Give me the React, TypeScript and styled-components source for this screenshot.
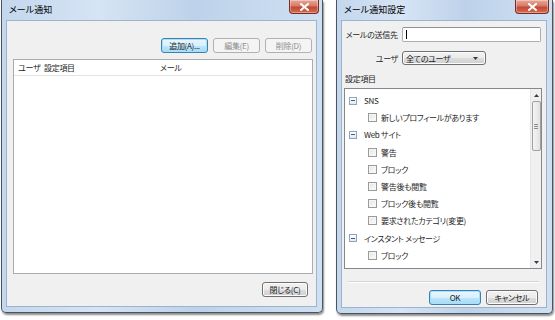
import React from "react";
import styled, { createGlobalStyle, css } from "styled-components";

const Global = createGlobalStyle`
  html, body { margin: 0; padding: 0; background: #ffffff; }
  body {
    font-family: "Noto Sans CJK JP", "Noto Sans", sans-serif;
    font-size: 8px;
    letter-spacing: -0.3px;
    font-feature-settings: "palt";
    color: #1e1e1e;
  }
  * { box-sizing: border-box; }
`;

const Page = styled.div`
  width: 555px;
  height: 320px;
  display: flex;
  align-items: flex-start;
  padding-left: 1px;
  gap: 13px;
`;

const Window = styled.div<{ $w: number; $h: number }>`
  width: ${(p) => p.$w}px;
  height: ${(p) => p.$h}px;
  display: flex;
  flex-direction: column;
  background: linear-gradient(90deg, #c3d7ee 0%, #d6e4f4 30%, #bdd2ea 60%, #cfe0f2 100%);
  border: 1px solid #4a5360;
  border-top: none;
  border-radius: 0 0 5px 5px;
  box-shadow: 1px 2px 2px rgba(0, 0, 0, 0.45);
  padding: 0 5px 5px 4px;
`;

const TitleBar = styled.div`
  height: 20px;
  flex: none;
  display: flex;
  justify-content: space-between;
  align-items: flex-start;
  margin-right: -2px;
`;

const Title = styled.span`
  font-size: 9px;
  letter-spacing: 0;
  line-height: 20px;
  padding-left: 3px;
  color: #000;
`;

const CloseBtn = styled.div<{ $w: number }>`
  width: ${(p) => p.$w}px;
  height: 14px;
  border: 1px solid #7a2a20;
  border-top: none;
  border-radius: 0 0 4px 4px;
  background: linear-gradient(180deg, #e9a99a 0%, #d77a66 45%, #c24a35 55%, #d46b52 100%);
  display: flex;
  align-items: center;
  justify-content: center;
  box-shadow: inset 0 0 0 1px rgba(255, 255, 255, 0.35);
`;

const Client = styled.div`
  flex: 1;
  background: #f0f0f0;
  border: 1px solid #9db3cc;
  display: flex;
  flex-direction: column;
  min-height: 0;
`;

const btnBase = css`
  height: 15px;
  border-radius: 3px;
  font-family: inherit;
  padding: 0;
  display: flex;
  align-items: center;
  justify-content: center;
`;

const Button = styled.div<{ $w: number; $variant?: "default" | "disabled" | "normal" }>`
  ${btnBase};
  width: ${(p) => p.$w}px;
  ${(p) =>
    p.$variant === "default"
      ? css`
          border: 1px solid #3c7fb1;
          background: linear-gradient(180deg, #eaf6fd 0%, #d9f0fc 50%, #bee6fd 52%, #a7d9f5 100%);
          color: #1a1a1a;
          box-shadow: inset 0 0 0 1px #a8e0f8;
        `
      : p.$variant === "disabled"
      ? css`
          border: 1px solid #adb2b5;
          background: #f4f4f4;
          color: #8d8d8d;
        `
      : css`
          border: 1px solid #707070;
          background: linear-gradient(180deg, #f2f2f2 0%, #ebebeb 50%, #dddddd 52%, #cfcfcf 100%);
          color: #1a1a1a;
          box-shadow: inset 0 0 0 1px #fcfcfc;
        `}
`;

/* ---------- Window 1 ---------- */

const Body1 = styled.div`
  flex: 1;
  display: flex;
  flex-direction: column;
  padding: 17px 4px 9px 6px;
`;

const ButtonRow = styled.div`
  display: flex;
  justify-content: flex-end;
  gap: 5px;
`;

const ListBox = styled.div`
  margin-top: 6px;
  height: 215px;
  background: #ffffff;
  border: 1px solid #a9acb1;
  margin-right: -1px;
`;

const ListHeader = styled.div`
  display: grid;
  grid-template-columns: 29px 114px 1fr;
  height: 16px;
  border-bottom: 1px solid #e3e3e3;
  align-items: center;
`;

const HeaderCell = styled.div<{ $pl: number }>`
  padding-left: ${(p) => p.$pl}px;
  line-height: 15px;
  white-space: nowrap;
  color: #1e1e1e;
`;

const Footer1 = styled.div`
  margin-top: auto;
  display: flex;
  justify-content: flex-end;
  padding-right: 4px;
`;

/* ---------- Window 2 ---------- */

const Body2 = styled.div`
  flex: 1;
  display: flex;
  flex-direction: column;
  padding: 5px 5px 5px 2px;
`;

const FieldRow = styled.div<{ $mt?: number }>`
  display: flex;
  align-items: center;
  height: 16px;
  margin-top: ${(p) => p.$mt ?? 0}px;
`;

const FieldLabel = styled.span`
  width: 58px;
  text-align: right;
  padding-right: 4px;
  white-space: nowrap;
`;

const TextInput = styled.div`
  width: 140px;
  height: 15px;
  background: #ffffff;
  border: 1px solid #abadb3;
  border-top-color: #8e9196;
  border-radius: 2px;
  display: flex;
  align-items: center;
  padding-left: 3px;
`;

const Caret = styled.span`
  width: 1px;
  height: 9px;
  background: #000;
`;

const Select = styled.div`
  width: 84px;
  height: 14px;
  border: 1px solid #707070;
  border-radius: 3px;
  background: linear-gradient(180deg, #f2f2f2 0%, #ebebeb 50%, #dddddd 52%, #cfcfcf 100%);
  box-shadow: inset 0 0 0 1px #fcfcfc;
  display: flex;
  align-items: center;
  justify-content: space-between;
  padding: 0 7px 0 3px;
`;

const SectionLabel = styled.div`
  margin-top: 6px;
  padding-left: 1px;
  line-height: 14px;
`;

const TreeBox = styled.div`
  margin-top: 2px;
  height: 181px;
  width: 198px;
  background: #ffffff;
  border: 1px solid #828790;
  display: flex;
`;

const TreeList = styled.div`
  flex: 1;
  padding-top: 3px;
`;

const TreeRow = styled.div<{ $level: number }>`
  height: 17.2px;
  display: flex;
  align-items: center;
  padding-left: ${(p) => (p.$level === 0 ? 4 : 23)}px;
  gap: 4px;
  white-space: nowrap;
`;

const Expander = styled.span`
  width: 8px;
  height: 8px;
  border: 1px solid #8ea4bf;
  background: linear-gradient(180deg, #ffffff, #e4e9ef);
  display: flex;
  align-items: center;
  justify-content: center;
  margin-right: 3px;
  &::after {
    content: "";
    width: 4px;
    height: 1px;
    background: #3d5a80;
  }
`;

const Check = styled.span`
  width: 9px;
  height: 9px;
  border: 1px solid #999a9a;
  background: linear-gradient(135deg, #e2e2e2 0%, #f6f6f6 70%, #ffffff 100%);
  box-shadow: inset 0 0 0 1px #f6f6f6;
`;

const ScrollBar = styled.div`
  width: 11px;
  background: #f0f0f0;
  border-left: 1px solid #e6e6e6;
  display: flex;
  flex-direction: column;
  align-items: center;
`;

const ScrollArrow = styled.div`
  height: 12px;
  width: 100%;
  display: flex;
  align-items: center;
  justify-content: center;
`;

const Thumb = styled.div`
  width: 9px;
  height: 50px;
  border: 1px solid #a0a0a0;
  border-radius: 2px;
  background: linear-gradient(90deg, #f4f4f4, #e2e2e2);
  display: flex;
  align-items: center;
  justify-content: center;
`;

const Grip = styled.div`
  width: 4px;
  height: 5px;
  background: repeating-linear-gradient(180deg, #8a8a8a 0 1px, transparent 1px 2px);
`;

const ScrollTrack = styled.div`
  flex: 1;
`;

const Separator = styled.div`
  margin: 12px 2px 0 4px;
  height: 2px;
  border-top: 1px solid #d5d5d5;
  border-bottom: 1px solid #ffffff;
`;

const Footer2 = styled.div`
  margin-top: 7px;
  display: flex;
  justify-content: flex-end;
  gap: 5px;
  padding-right: 3px;
`;

const Cross = () => (
  <svg width="9" height="8" viewBox="0 0 9 8">
    <path d="M1 1 L8 7 M8 1 L1 7" stroke="#ffffff" strokeWidth="2" strokeLinecap="square" />
  </svg>
);

const Tri = ({ up }: { up?: boolean }) => (
  <svg width="5" height="3" viewBox="0 0 5 3">
    <path d={up ? "M0 3 L2.5 0 L5 3 Z" : "M0 0 L5 0 L2.5 3 Z"} fill="#3c3c3c" />
  </svg>
);

type Item = { level: number; text: string };
const items: Item[] = [
  { level: 0, text: "SNS" },
  { level: 1, text: "新しいプロフィールがあります" },
  { level: 0, text: "Web サイト" },
  { level: 1, text: "警告" },
  { level: 1, text: "ブロック" },
  { level: 1, text: "警告後も閲覧" },
  { level: 1, text: "ブロック後も閲覧" },
  { level: 1, text: "要求されたカテゴリ(変更)" },
  { level: 0, text: "インスタント メッセージ" },
  { level: 1, text: "ブロック" },
];

export default function App() {
  return (
    <>
      <Global />
      <Page>
        <Window $w={322} $h={313}>
          <TitleBar>
            <Title>メール通知</Title>
            <CloseBtn $w={30}>
              <Cross />
            </CloseBtn>
          </TitleBar>
          <Client>
            <Body1>
              <ButtonRow>
                <Button $w={47} $variant="default">追加(A)...</Button>
                <Button $w={47} $variant="disabled">編集(E)</Button>
                <Button $w={47} $variant="disabled">削除(D)</Button>
              </ButtonRow>
              <ListBox>
                <ListHeader>
                  <HeaderCell $pl={4}>ユーザ</HeaderCell>
                  <HeaderCell $pl={1}>設定項目</HeaderCell>
                  <HeaderCell $pl={3}>メール</HeaderCell>
                </ListHeader>
              </ListBox>
              <Footer1>
                <Button $w={46}>閉じる(C)</Button>
              </Footer1>
            </Body1>
          </Client>
        </Window>
        <Window $w={217} $h={314}>
          <TitleBar>
            <Title>メール通知設定</Title>
            <CloseBtn $w={34}>
              <Cross />
            </CloseBtn>
          </TitleBar>
          <Client>
            <Body2>
              <FieldRow>
                <FieldLabel>メールの送信先</FieldLabel>
                <TextInput>
                  <Caret />
                </TextInput>
              </FieldRow>
              <FieldRow $mt={8}>
                <FieldLabel>ユーザ</FieldLabel>
                <Select>
                  <span>全てのユーザ</span>
                  <Tri />
                </Select>
              </FieldRow>
              <SectionLabel>設定項目</SectionLabel>
              <TreeBox>
                <TreeList>
                  {items.map((it, i) => (
                    <TreeRow key={i} $level={it.level}>
                      {it.level === 0 ? <Expander /> : <Check />}
                      <span>{it.text}</span>
                    </TreeRow>
                  ))}
                </TreeList>
                <ScrollBar>
                  <ScrollArrow>
                    <Tri up />
                  </ScrollArrow>
                  <Thumb>
                    <Grip />
                  </Thumb>
                  <ScrollTrack />
                  <ScrollArrow>
                    <Tri />
                  </ScrollArrow>
                </ScrollBar>
              </TreeBox>
              <Separator />
              <Footer2>
                <Button $w={52} $variant="default">OK</Button>
                <Button $w={52}>キャンセル</Button>
              </Footer2>
            </Body2>
          </Client>
        </Window>
      </Page>
    </>
  );
}
